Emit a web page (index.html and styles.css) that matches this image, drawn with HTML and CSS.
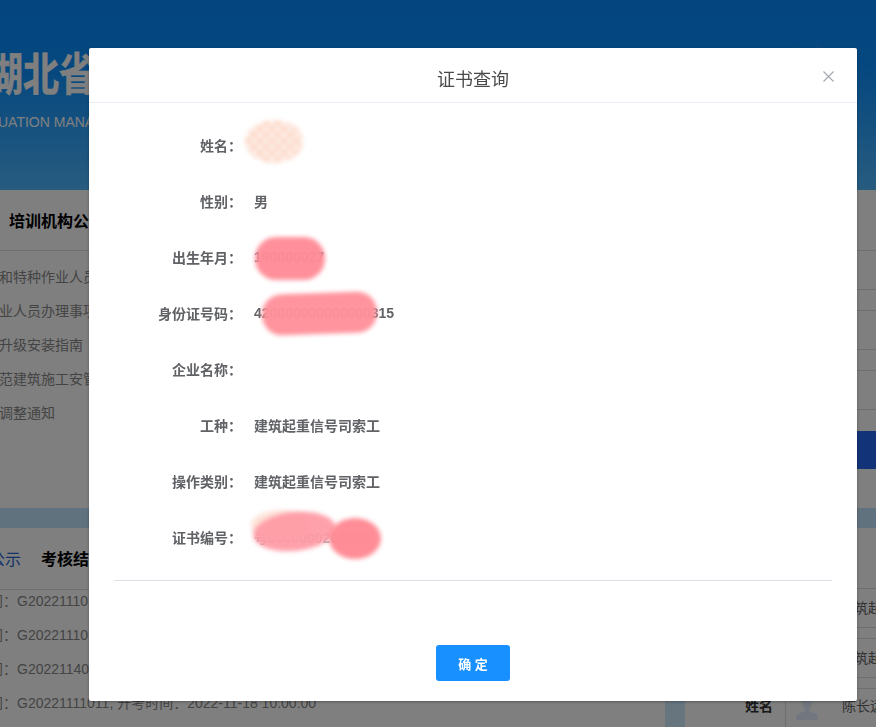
FILE: index.html
```html
<!DOCTYPE html>
<html lang="zh-CN">
<head>
<meta charset="utf-8">
<title>证书查询</title>
<link rel="stylesheet" href="styles.css">
</head>
<body>
<div class="page">
  <header class="hero">
    <svg class="hero-map" width="120" height="90" viewBox="0 0 120 90"><path d="M10 40 38 16 50 42 26 60ZM56 12 92 40 80 70 60 44Z" fill="#fff" opacity=".05"/></svg>
    <div class="hero-title">湖北省</div>
    <div class="hero-sub">UATION MANAGEMENT</div>
  </header>
  <section class="upper">
    <div class="notices">
      <h2 class="notices-title">培训机构公告</h2>
      <ul class="notice-list">
        <li>和特种作业人员</li>
        <li>业人员办理事项</li>
        <li>升级安装指南</li>
        <li>范建筑施工安管</li>
        <li>调整通知</li>
      </ul>
    </div>
    <div class="side-links">
      <div class="side-row"></div>
      <div class="side-row"></div>
      <div class="side-row"></div>
      <div class="side-btn"></div>
    </div>
  </section>
  <div class="band"></div>
  <section class="lower">
    <div class="results">
      <div class="tabs"><span class="tab-active">公示</span><span class="tab">考核结果</span></div>
      <ul class="result-list">
        <li>间：G20221110</li>
        <li>间：G20221110</li>
        <li>间：G20221140</li>
        <li>间：G20221111011, 开考时间：2022-11-18 10:00:00</li>
      </ul>
    </div>
    <div class="people">
      <div class="people-row">筑起</div>
      <div class="people-row">筑起</div>
      <div class="person">
        <span class="person-strip"></span>
        <span class="person-label">姓名</span>
        <span class="person-photo">
          <svg width="22" height="24" viewBox="0 0 22 24"><path d="M11 0c3.500 0 5 2.500 5 6s-1.500 6-3 7v2l7 3c1.200.6 2 1.500 2 3v3H0v-3c0-1.500.8-2.400 2-3l7-3v-2c-1.500-1-3-3.500-3-7s1.500-6 5-6Z" fill="#e2ecff"/></svg>
        </span>
        <span class="person-name">陈长远</span>
      </div>
    </div>
  </section>
</div>
<div class="overlay"></div>
<div class="dialog">
  <div class="dialog-head">
    <span class="dialog-title">证书查询</span>
    <svg class="dialog-close" width="11" height="11" viewBox="0 0 11 11"><path d="M.5.500l10 10M10.500.500l-10 10" stroke="#a3a6ad" stroke-width="1.100" fill="none"/></svg>
  </div>
  <div class="form">
    <div class="form-row"><span class="form-label">姓名：</span><span class="form-value"><i class="blob blob-name"></i></span></div>
    <div class="form-row"><span class="form-label">性别：</span><span class="form-value">男</span></div>
    <div class="form-row"><span class="form-label">出生年月：</span><span class="form-value">190000027<i class="blob blob-birth"></i></span></div>
    <div class="form-row"><span class="form-label">身份证号码：</span><span class="form-value">420000000000000315<i class="blob blob-id"></i></span></div>
    <div class="form-row"><span class="form-label">企业名称：</span><span class="form-value"></span></div>
    <div class="form-row"><span class="form-label">工种：</span><span class="form-value">建筑起重信号司索工</span></div>
    <div class="form-row"><span class="form-label">操作类别：</span><span class="form-value">建筑起重信号司索工</span></div>
    <div class="form-row"><span class="form-label">证书编号：</span><span class="form-value value-faint">号0000000200000<i class="blob blob-peach"></i><i class="blob blob-cert"></i><i class="blob blob-cert2"></i></span></div>
  </div>
  <div class="dialog-rule"></div>
  <div class="dialog-foot"><button class="btn-ok" type="button">确 定</button></div>
</div>
</body>
</html>
```
FILE: styles.css
```css
* { box-sizing: border-box; }
html, body { margin: 0; height: 100%; }
body {
  width: 876px;
  height: 727px;
  overflow: hidden;
  background: #fff;
  font-family: "Liberation Sans", "Noto Sans CJK SC", sans-serif;
}
ul { list-style: none; margin: 0; padding: 0; }

.page { width: 876px; height: 727px; overflow: hidden; }

.hero {
  position: relative;
  height: 190px;
  overflow: hidden;
  padding-top: 50px;
  background: linear-gradient(180deg, #088aff 0%, #0a8fff 35%, #4fb8ff 100%);
  color: #fff;
}
.hero-map { position: absolute; left: 760px; top: 30px; }
.hero-title {
  margin-left: -13px;
  font-size: 45px;
  line-height: 52px;
  font-weight: 700;
  white-space: nowrap;
  transform: scaleX(.8);
  transform-origin: left center;
  -webkit-text-stroke: .6px #fff;
}
.hero-sub {
  margin: 10px 0 0 -2px;
  font-size: 14px;
  line-height: 20px;
  white-space: nowrap;
}

.upper { display: flex; justify-content: space-between; height: 318px; }
.notices { width: 440px; overflow: hidden; }
.notices-title {
  margin: 0;
  height: 61px;
  padding: 20px 0 0 9px;
  font-size: 16px;
  line-height: 24px;
  font-weight: 700;
  color: #000;
  border-bottom: 1px solid #ddd;
  white-space: nowrap;
}
.notice-list { padding-top: 13px; margin-left: -1px; }
.notice-list li, .result-list li {
  height: 26px;
  margin-bottom: 8px;
  font-size: 14px;
  line-height: 26px;
  color: #888;
  white-space: nowrap;
}
.side-links { width: 376px; padding-top: 60px; }
.side-row {
  height: 40px;
  margin-bottom: 20px;
  border-top: 1px solid #ddd;
  border-bottom: 1px solid #ddd;
}
.side-btn { height: 38px; margin-top: 21px; background: #2566ee; }

.band { height: 20px; background: #c3e4ff; }

.lower { display: flex; justify-content: space-between; height: 199px; }
.results { width: 560px; overflow: hidden; }
.tabs {
  display: flex;
  gap: 20px;
  height: 62px;
  margin-left: -11px;
  padding-top: 20px;
  font-size: 16px;
  line-height: 24px;
  border-bottom: 1px solid #ddd;
  white-space: nowrap;
}
.tab-active { color: #2566d0; }
.tab { color: #000; font-weight: 700; }
.result-list { margin-top: -2px; }
.result-list li { margin-left: -11px; }

.people { width: 211px; padding-top: 60px; }
.people-row {
  height: 40px;
  margin-bottom: 10px;
  padding: 6px 0 0 189px;
  font-size: 14px;
  line-height: 26px;
  color: #666;
  border-top: 1px solid #ddd;
  border-bottom: 1px solid #ddd;
  white-space: nowrap;
  overflow: hidden;
}
.person { display: flex; align-items: stretch; height: 40px; border-top: 1px solid #ddd; white-space: nowrap; }
.person > span { flex: none; }
.person-strip { width: 20px; margin-top: 12px; background: #cfeaff; }
.person-label {
  width: 101px;
  padding: 7px 12px 0 0;
  text-align: right;
  font-size: 14px;
  line-height: 20px;
  font-weight: 700;
  color: #333;
  border-right: 1px solid #ddd;
}
.person-photo { width: 56px; padding: 7px 0 0 10px; }
.person-name { padding-top: 7px; font-size: 14px; line-height: 20px; color: #666; }

.overlay { position: fixed; inset: 0; background: rgba(0, 0, 0, .5); }

.dialog {
  position: absolute;
  left: 89px;
  top: 48px;
  width: 768px;
  height: 653px;
  background: #fff;
  border-radius: 2px;
  box-shadow: 0 1px 3px rgba(0, 0, 0, .3);
}
.dialog-head {
  position: relative;
  height: 55px;
  padding-top: 18px;
  text-align: center;
  border-bottom: 1px solid #ebeef5;
}
.dialog-title { font-size: 18px; line-height: 28px; color: #4a4a4a; }
.dialog-close { position: absolute; right: 23px; top: 23px; }

.form { padding-top: 14px; padding-bottom: 1px; }
.form-row {
  display: flex;
  align-items: center;
  height: 56px;
  font-size: 14px;
  font-weight: 700;
  color: #606266;
}
.form-label { width: 153px; text-align: right; }
.form-value { position: relative; margin-left: 12px; white-space: nowrap; }
.value-faint { color: #aaa; }

.blob { position: absolute; display: block; filter: blur(2px); }
.blob-name {
  left: -9px; top: -25px; width: 58px; height: 43px; border-radius: 50%;
  background: repeating-conic-gradient(#fdd9c8 0 25%, #fdeee8 0 50%) 0 0 / 12px 12px;
}
.blob-birth { left: 1px; top: -12px; width: 70px; height: 43px; border-radius: 21px; background: #ff8d98; opacity: .97; }
.blob-id {
  left: 8px; top: -12px; width: 115px; height: 41px; border-radius: 20px;
  background: #ff919b; opacity: .97; transform: rotate(-2deg);
}
.blob-peach { left: -3px; top: -17px; width: 60px; height: 30px; border-radius: 50%; background: #fde3d8; }
.blob-cert { left: -1px; top: -15px; width: 83px; height: 39px; border-radius: 50%; background: #ff9aa5; opacity: .93; transform: rotate(-6deg); }
.blob-cert2 { left: 75px; top: -9px; width: 52px; height: 41px; border-radius: 50%; background: #ff8a94; opacity: .97; }

.dialog-rule { height: 1px; margin: 14px 25px 0; background: #dcdfe6; }
.dialog-foot { display: flex; justify-content: center; padding-top: 64px; }
.btn-ok {
  width: 74px;
  height: 36px;
  border: 0;
  border-radius: 3px;
  background: #1890ff;
  color: #fff;
  font-family: inherit;
  font-size: 13px;
  font-weight: 700;
}
```
